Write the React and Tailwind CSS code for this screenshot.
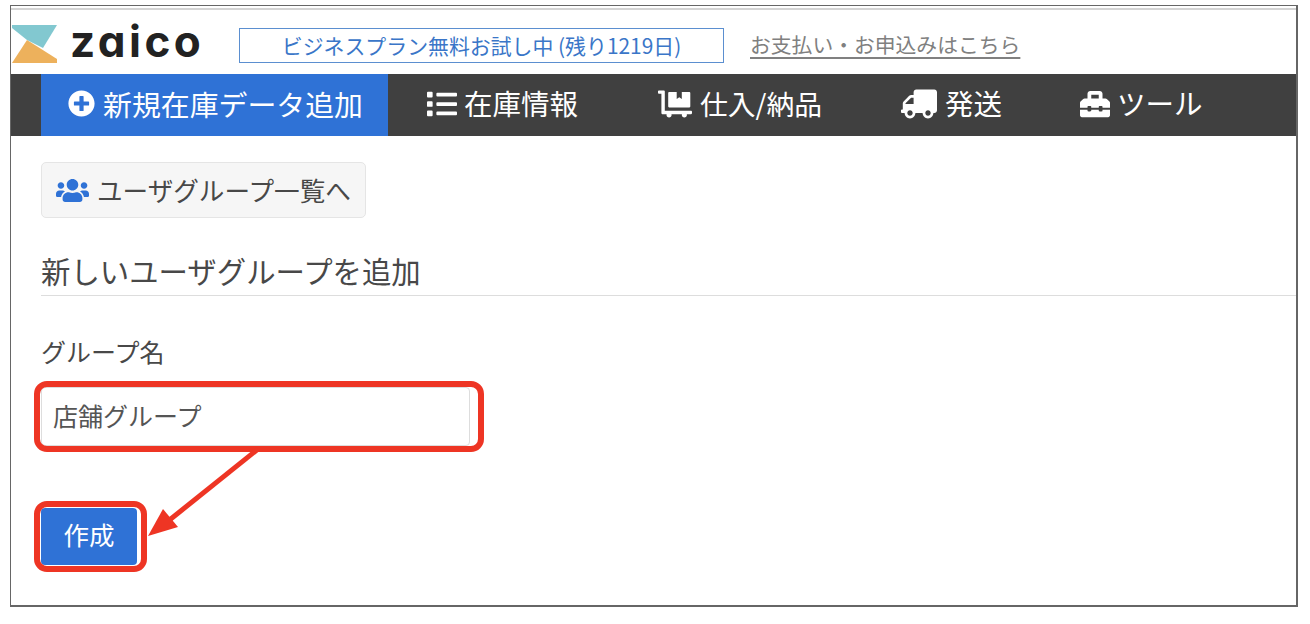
import React from 'react';
import { FaPlusCircle, FaList, FaDollyFlatbed, FaTruck, FaToolbox, FaUsers } from 'react-icons/fa';

const jp = "font-['Noto_Sans_CJK_JP','Liberation_Sans',sans-serif]";

function NavItem({icon, label, className, textClass = 'text-[28.5px]'}){
  return (
    <div className={`flex items-center h-full pb-[3px] ${className}`}>
      {icon}
      <span className={`${textClass} leading-none`}>{label}</span>
    </div>
  );
}

export default function App(){
  return (
    <div className={`w-[1310px] h-[624px] bg-white overflow-hidden pt-[5px] pl-[10px] ${jp}`}>
      <div className="w-[1288px] h-[602px] border border-[#666] border-b-2 border-r-2 relative">
        <div className="h-[68px] pt-[2px]">
          <div className="h-[2px] bg-[#d4d4d4]"></div>
          <div className="flex items-center h-[64px]">
            <svg width="46" height="39" viewBox="0 0 46 39" className="ml-[1px] mt-[4px] shrink-0">
              <path d="M0 0H45L31 23L15 15L0 3Z" fill="#82c8d0"/>
              <path d="M0 38L15 15L45 34V38Z" fill="#edb15c"/>
            </svg>
            <span className="ml-[12px] w-[133px] block font-['Inter',sans-serif] font-bold text-[44px] leading-none tracking-[3.5px] text-[#222] -mt-[3px] [font-feature-settings:'cv11']">zaico</span>
            <div className="ml-[36px] mt-[6px] w-[485px] h-[35px] border border-[#5b8fd0] flex items-center justify-center text-[#3a76c8] text-[20.9px] leading-none">ビジネスプラン無料お試し中 (残り1219日)</div>
            <a className="ml-[26px] mt-[4px] text-[#808080] text-[20.8px] leading-none underline underline-offset-4">お支払い・お申込みはこちら</a>
          </div>
        </div>

        <div className="h-[62px] bg-[#404040] flex text-white pl-[30px]">
          <NavItem className="w-[347px] bg-[#2f72d6] pl-[27px]" textClass="text-[28.9px]" icon={<FaPlusCircle className="text-[27px] mr-[8px]"/>} label="新規在庫データ追加"/>
          <NavItem className="ml-[39px] w-[231px]" icon={<FaList className="text-[30px] mr-[7px]"/>} label="在庫情報"/>
          <NavItem className="w-[243px]" textClass="text-[27.8px]" icon={<FaDollyFlatbed className="text-[34px] mr-[8px]"/>} label="仕入/納品"/>
          <NavItem className="w-[179px]" icon={<FaTruck className="text-[36px] mr-[8px] -scale-x-100"/>} label="発送"/>
          <NavItem icon={<FaToolbox className="text-[30px] mr-[7px]"/>} label="ツール"/>
        </div>

        <div className="pl-[30px] pt-[26px] text-[#484848]">
          <button className="w-[325px] h-[56px] bg-[#f6f6f6] border border-[#e5e5e5] rounded-[5px] flex items-center pl-[14px]">
            <FaUsers className="text-[33px] text-[#2f72d6] mr-[8px]"/>
            <span className="text-[25.6px] leading-none">ユーザグループ一覧へ</span>
          </button>
          <div className="mt-[34px] h-[44px] border-b border-[#ddd] text-[29.4px] leading-[36px]">新しいユーザグループを追加</div>
          <div className="mt-[43px] text-[25px] leading-none">グループ名</div>

          <div className="relative mt-[23px] w-[429px] h-[59px]">
            <input readOnly value="店舗グループ" className="block w-full h-full border border-[#ddd] rounded-[4px] pl-[11px] pb-[3px] text-[25px] text-[#555] bg-white outline-none"/>
            <div className="absolute -left-[7px] -top-[6px] -right-[14px] -bottom-[6px] border-[6px] border-[#ee3524] rounded-[13px] pointer-events-none"></div>
          </div>

          <div className="relative mt-[62px] w-[96px] h-[57px]">
            <button className="block w-full h-full bg-[#2f72d6] rounded-[4px] text-white text-[25.5px] pb-[5px]">作成</button>
            <div className="absolute -left-[7px] -top-[7px] -right-[10px] -bottom-[7px] border-[6px] border-[#ee3524] rounded-[13px] pointer-events-none"></div>
          </div>
        </div>

        <svg className="absolute left-0 top-0 pointer-events-none" width="1288" height="602">
          <line x1="247" y1="443" x2="156" y2="516" stroke="#ee3524" strokeWidth="5"/>
          <polygon points="137,530 152,503 167,521" fill="#ee3524"/>
        </svg>
      </div>
    </div>
  );
}
